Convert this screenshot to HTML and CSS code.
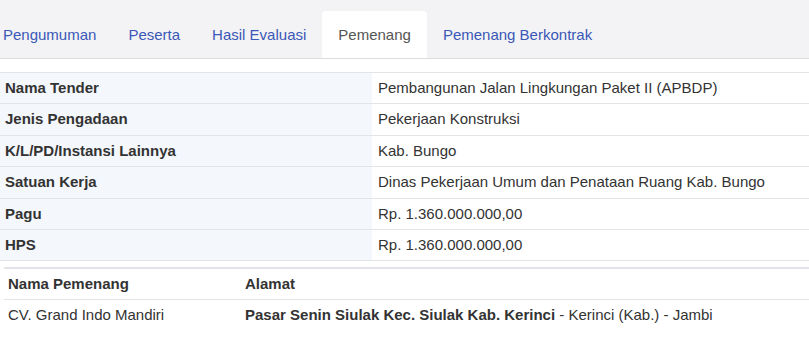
FILE: index.html
```html
<!DOCTYPE html>
<html lang="en">
<head>
  <meta charset="UTF-8" />
  <title>Pemenang</title>
  <link rel="stylesheet" href="styles.css">
</head>
<body>
  <div class="tabbar">
    <ul class="tabs">
      <li><a href="#">Pengumuman</a></li>
      <li><a href="#">Peserta</a></li>
      <li><a href="#">Hasil Evaluasi</a></li>
      <li class="active"><a href="#">Pemenang</a></li>
      <li><a href="#">Pemenang Berkontrak</a></li>
    </ul>
  </div>

  <table class="info">
    <tr><th>Nama Tender</th><td>Pembangunan Jalan Lingkungan Paket II (APBDP)</td></tr>
    <tr><th>Jenis Pengadaan</th><td>Pekerjaan Konstruksi</td></tr>
    <tr><th>K/L/PD/Instansi Lainnya</th><td>Kab. Bungo</td></tr>
    <tr><th>Satuan Kerja</th><td>Dinas Pekerjaan Umum dan Penataan Ruang Kab. Bungo</td></tr>
    <tr><th>Pagu</th><td>Rp. 1.360.000.000,00</td></tr>
    <tr><th>HPS</th><td>Rp. 1.360.000.000,00</td></tr>
  </table>

  <table class="winner">
    <tr><th class="name">Nama Pemenang</th><th>Alamat</th></tr>
    <tr>
      <td>CV. Grand Indo Mandiri</td>
      <td><b>Pasar Senin Siulak Kec. Siulak Kab. Kerinci</b> - Kerinci (Kab.) - Jambi</td>
    </tr>
  </table>
</body>
</html>
```

FILE: styles.css
```css
body { margin: 0; font-family: "Liberation Sans", Arial, sans-serif; font-size: 15px; color: #333; background: #fff; }

.tabbar { background: #f3f3f5; border-bottom: 1px solid #dcdcdf; height: 58px; }
.tabs { list-style: none; margin: 0 0 0 -13px; padding: 11px 0 0; display: flex; }
.tabs li { height: 48px; }
.tabs a { display: block; padding: 14px 16px 13px; line-height: 20px; color: #3a58b7; text-decoration: none; border-radius: 4px 4px 0 0; }
.tabs .active a { background: #fff; color: #555; }

table { border-collapse: collapse; }
.info { width: 100%; margin-top: 13px; }
.info th, .info td { text-align: left; padding: 5px 5px; line-height: 20.4px; border-top: 1px solid #e3e4e8; }
.info tr:last-child th, .info tr:last-child td { border-bottom: 1px solid #e3e4e8; }
.info th { width: 362px; background: #f4f7fb; }
.info td { padding-left: 6px; }

.winner { width: calc(100% - 4px); margin: 6px 0 0 4px; border-top: 2px solid #e3e4e8; }
.winner th, .winner td { text-align: left; padding: 5px 4px; line-height: 19.5px; font-weight: normal; }
.winner th { font-weight: bold; border-bottom: 1px solid #e3e4e8; }
.winner .name { width: 229px; }
```
